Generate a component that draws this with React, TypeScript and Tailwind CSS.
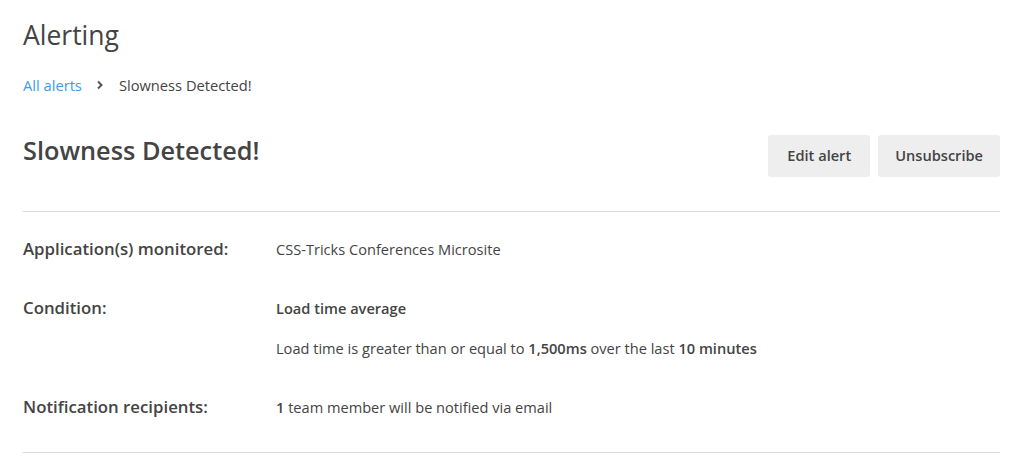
import React from "react";

export default function App() {
  return (
    <div className="min-h-screen bg-white pl-[23px] pr-[24px] pt-[17px] text-[#444] [font-family:'Open_Sans',sans-serif]">
      <h1 className="text-[26.5px] leading-[36px] font-normal text-[#444]">Alerting</h1>

      <nav className="mt-[22px] flex items-center text-[14.7px] leading-[20px]">
        <a href="#" className="text-[#3d9be9]">All alerts</a>
        <svg className="ml-[14px] mr-[15px]" width="8" height="10" viewBox="0 0 8 10" fill="none">
          <path d="M2 1.5L5.5 5L2 8.5" stroke="#555" strokeWidth="2" />
        </svg>
        <span className="text-[#444]">Slowness Detected!</span>
      </nav>

      <div className="mt-[40px] flex items-start justify-between">
        <h2 className="-mt-[3px] text-[25.3px] leading-[36px] font-semibold text-[#444]">Slowness Detected!</h2>
        <div className="flex gap-[8px]">
          <button className="h-[42px] rounded-[3px] bg-[#eeeeef] px-[19px] text-[14.6px] font-semibold text-[#444]">
            Edit alert
          </button>
          <button className="h-[42px] rounded-[3px] bg-[#eeeeef] px-[17px] text-[14.6px] font-semibold text-[#444]">
            Unsubscribe
          </button>
        </div>
      </div>

      <div className="mt-[34px] border-t border-[#d9d9d9] pt-[25px] pb-[33px] border-b">
        <div className="grid grid-cols-[253px_1fr] gap-y-[35px]">
          <div className="text-[16.8px] leading-[24px] font-semibold">Application(s) monitored:</div>
          <div className="text-[14.6px] leading-[24px]">CSS-Tricks Conferences Microsite</div>

          <div className="text-[16.8px] leading-[24px] font-semibold">Condition:</div>
          <div className="flex flex-col gap-[16px] text-[14.6px] leading-[24px]">
            <div className="font-semibold">Load time average</div>
            <div>
              Load time is greater than or equal to <span className="font-semibold">1,500ms</span> over the last{" "}
              <span className="font-semibold">10 minutes</span>
            </div>
          </div>

          <div className="text-[16.8px] leading-[24px] font-semibold">Notification recipients:</div>
          <div className="text-[14.6px] leading-[24px]">
            <span className="font-semibold">1</span> team member will be notified via email
          </div>
        </div>
      </div>
    </div>
  );
}
